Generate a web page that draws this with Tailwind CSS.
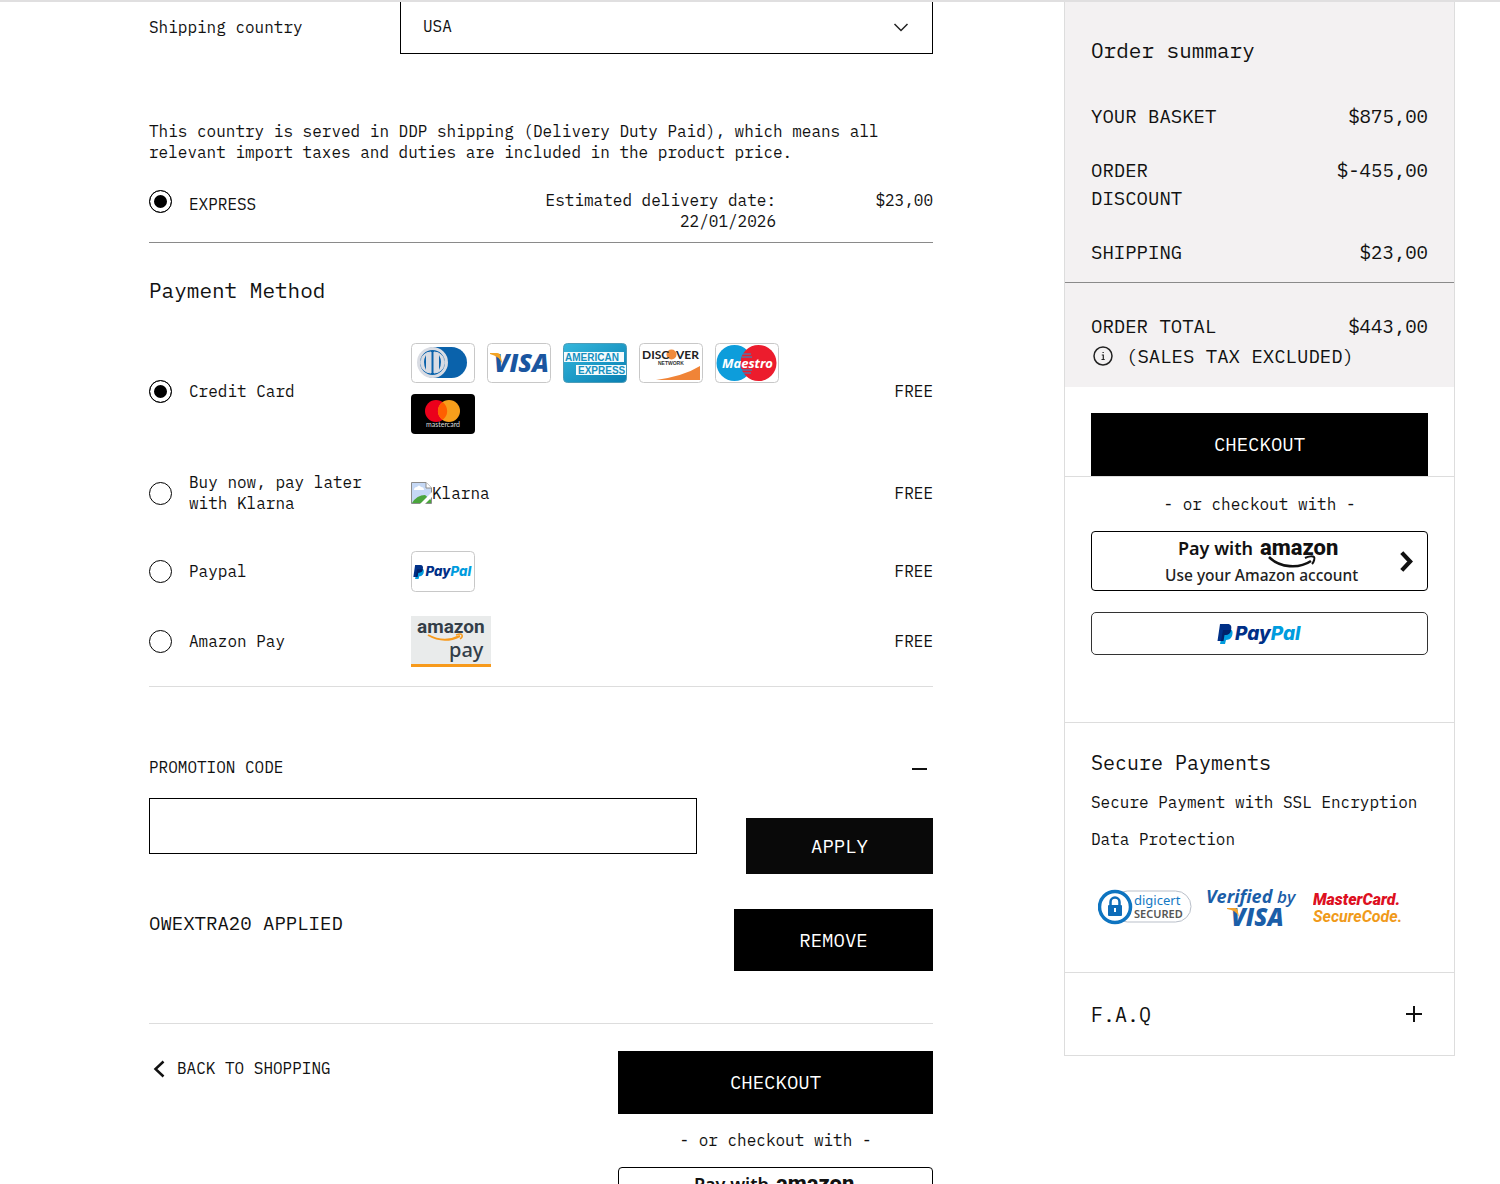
<!DOCTYPE html>
<html lang="en">
<head>
<meta charset="utf-8">
<meta name="viewport" content="width=device-width, initial-scale=1">
<title>Checkout</title>
<script src="https://cdn.jsdelivr.net/npm/@tailwindcss/browser@4"></script>
</head>
<body class="bg-white text-[#111] font-['IBM_Plex_Mono','Liberation_Mono',monospace] text-base leading-[21px]">

<!-- Shared logo artwork -->
<svg class="hidden" aria-hidden="true">
  <symbol id="amazon-pay-label" viewBox="0 0 200 50">
    <text x="18" y="18" font-family="Noto Sans" font-weight="600" font-size="18" fill="#111">Pay with</text>
    <text x="100" y="18" font-family="Roboto" font-weight="800" font-size="22" fill="#111">amazon</text>
    <path d="M109 20c11 11 30 12 42 4" fill="none" stroke="#111" stroke-width="2.600"/>
    <path d="M145 21c4-2 8-2 9-1s0 5-2 7" fill="none" stroke="#111" stroke-width="2"/>
    <text x="5" y="44" font-family="Noto Sans" font-weight="500" font-size="15.500" fill="#222">Use your Amazon account</text>
  </symbol>
  <symbol id="paypal-mark" viewBox="0 0 86 22">
    <path d="M6 6h7c3 1 3 4 2 7-1 3-4 4-6 4l-1 4H3z" fill="#009cde"/>
    <path d="M3 1h7.500c3.500 0 4.500 2.500 3.500 6-1 4-4 5-7 5l-1 6H.500z" fill="#003087"/>
    <path d="M6 7h8c-.500 4-3 5-6.500 5l-1 6H4z" fill="#012169"/>
    <text x="18" y="17" font-family="Inter" font-weight="800" font-style="italic" font-size="19" fill="#003087">Pay<tspan fill="#009cde">Pal</tspan></text>
  </symbol>
</svg>

<header class="h-[2px] bg-[#e0dfe0]"></header>

<div class="flex items-start pl-[149px] pr-[45px] gap-[131px] h-[calc(100vh-2px)] overflow-hidden">

  <main class="flex-1 min-w-0">
    <div class="flex">
      <label for="country" class="w-[251px] pt-[15px]">Shipping country</label>
      <div class="relative flex-1">
        <select id="country" class="appearance-none w-full h-[52px] pl-[22px] pb-[2px] border border-t-0 border-black bg-white"><option>USA</option></select>
        <svg class="absolute right-6 top-5 pointer-events-none" width="16" height="11" viewBox="0 0 16 11" fill="none" stroke="#222" stroke-width="1.500"><path d="M1.500 2 8 8.500 14.500 2"/></svg>
      </div>
    </div>

    <p class="mt-[67px] pr-10">This country is served in DDP shipping (Delivery Duty Paid), which means all relevant import taxes and duties are included in the product price.</p>

    <div class="mt-[27px] pb-[10px] flex border-b border-[#8a8a8a]">
      <input type="radio" id="express" name="shipping" checked class="appearance-none size-[23px] shrink-0 rounded-full border border-black checked:bg-black checked:shadow-[inset_0_0_0_4px_white]">
      <label for="express" class="ml-[17px] pt-1 flex-1">EXPRESS</label>
      <div class="w-[260px] text-right">Estimated delivery date: 22/01/2026</div>
      <div class="w-[157px] text-right">$23,00</div>
    </div>

    <h2 class="mt-[34px] text-[21px] leading-[26px]">Payment Method</h2>

    <div class="mt-9 pb-[19px] border-b border-[#ddd]">
      <div class="grid grid-cols-[40px_222px_1fr_auto] items-center min-h-[104px]">
        <input type="radio" id="cc" name="pay" checked class="appearance-none size-[23px] rounded-full border border-black checked:bg-black checked:shadow-[inset_0_0_0_4px_white]">
        <label for="cc">Credit Card</label>
        <div class="flex flex-wrap gap-x-3 gap-y-[10px] max-w-[400px] pb-1">
          <svg width="64" height="41" viewBox="0 0 64 41" role="img" aria-label="Diners Club"><rect x=".5" y=".5" width="63" height="39" rx="4" fill="#fff" stroke="#c8c8c8"/><rect x="8" y="4" width="48" height="31" rx="15.500" fill="#0a62ab"/><circle cx="21.500" cy="19.500" r="14" fill="#0a62ab" stroke="#d9dce3" stroke-width="3"/><path d="M20 9a10.500 10.500 0 0 0 0 21zM23 9a10.500 10.500 0 0 1 0 21z" fill="#d9dce3" stroke="#d9dce3"/><path d="M15 12q-4 7 0 15zM28 12q4 7 0 15z" fill="#0a62ab"/></svg>
          <svg width="64" height="41" viewBox="0 0 64 41" role="img" aria-label="Visa"><rect x=".5" y=".5" width="63" height="39" rx="4" fill="#fff" stroke="#c8c8c8"/><text x="7" y="29" font-family="Open Sans" font-weight="800" font-style="italic" font-size="25" fill="#1a56a0">VISA</text><path d="M3 10h7q3 0 3.500 3l2 8Q12 13 3 11z" fill="#f2a325"/></svg>
          <svg width="64" height="41" viewBox="0 0 64 41" role="img" aria-label="American Express"><defs><linearGradient id="ax" x1="0" y1="0" x2="1" y2="1"><stop offset="0" stop-color="#35b7dc"/><stop offset="1" stop-color="#087fb2"/></linearGradient></defs><rect x=".5" y=".5" width="63" height="39" rx="4" fill="url(#ax)" stroke="#4c9cb8"/><path d="M1 9h60v10H1zM13 22h50v10H13z" fill="#f4fbfd"/><text x="2" y="18" font-family="Liberation Sans" font-weight="700" font-size="10" fill="#1590bf">AMERICAN</text><text x="15" y="31" font-family="Liberation Sans" font-weight="700" font-size="10" fill="#1590bf">EXPRESS</text></svg>
          <svg width="64" height="41" viewBox="0 0 64 41" role="img" aria-label="Discover Network"><rect x=".5" y=".5" width="63" height="39" rx="4" fill="#fff" stroke="#c8c8c8"/><circle cx="32.500" cy="11.500" r="5" fill="#f08a3a"/><text x="3" y="16" font-family="Lato" font-weight="700" font-size="12" fill="#222">DISC</text><text x="37" y="16" font-family="Lato" font-weight="700" font-size="12" fill="#222">VER</text><text x="19" y="22" font-family="Liberation Sans" font-weight="700" font-size="5" fill="#333">NETWORK</text><path d="M17 37Q45 33 61 23v14z" fill="#f08437"/></svg>
          <svg width="64" height="41" viewBox="0 0 64 41" role="img" aria-label="Maestro"><rect x=".5" y=".5" width="63" height="39" rx="4" fill="#fff" stroke="#c8c8c8"/><circle cx="19.500" cy="20" r="18" fill="#0d9ddb"/><circle cx="43.500" cy="20" r="18" fill="#ec1c2d"/><path d="M28 11h8M27 14h10M26 27h11M27 30h9" stroke="#0d9ddb"/><text x="7" y="25" font-family="Open Sans" font-weight="700" font-style="italic" font-size="13" fill="#fff">Maestro</text></svg>
          <svg width="64" height="41" viewBox="0 0 64 41" role="img" aria-label="Mastercard"><rect width="64" height="40" rx="4" fill="#000"/><circle cx="25" cy="17" r="11" fill="#eb001b"/><circle cx="38" cy="17" r="11" fill="#f79e1b"/><path d="M31.500 8a11 11 0 0 1 0 18a11 11 0 0 1 0-18" fill="#ff5f00"/><text x="32" y="33" text-anchor="middle" font-family="Lato" font-size="7" fill="#ddd">mastercard</text></svg>
        </div>
        <span>FREE</span>
      </div>

      <div class="grid grid-cols-[40px_222px_1fr_auto] items-center min-h-[100px]">
        <input type="radio" id="klarna" name="pay" class="appearance-none size-[23px] rounded-full border border-black checked:bg-black checked:shadow-[inset_0_0_0_4px_white]">
        <label for="klarna" class="pr-8">Buy now, pay later with Klarna</label>
        <div class="flex items-center">
          <svg width="21" height="22" viewBox="0 0 21 22" aria-hidden="true"><path d="M.500.500h14.500l5.500 5.500v15.500H.500z" fill="#c5d8f5" stroke="#8c8c8c"/><path d="M15 .500v5.500h5.500" fill="#fff" stroke="#8c8c8c"/><path d="M3 8q0-3 3-3 2-3 4 0 3 0 3 3z" fill="#fff"/><path d="M1 21q5-8 13-8l6 5v3z" fill="#4aa53c"/><path d="M21 10 9 22h5l7-7z" fill="#fff"/></svg>
          <span>Klarna</span>
        </div>
        <span>FREE</span>
      </div>

      <div class="grid grid-cols-[40px_222px_1fr_auto] items-center min-h-[57px]">
        <input type="radio" id="paypal" name="pay" class="appearance-none size-[23px] rounded-full border border-black checked:bg-black checked:shadow-[inset_0_0_0_4px_white]">
        <label for="paypal">Paypal</label>
        <svg width="64" height="41" viewBox="0 0 64 41" role="img" aria-label="PayPal"><rect x=".5" y=".5" width="63" height="40" rx="4" fill="#fff" stroke="#c8c8c8"/><use href="#paypal-mark" x="2" y="13" width="60" height="16"/></svg>
        <span>FREE</span>
      </div>

      <div class="mt-4 grid grid-cols-[40px_222px_1fr_auto] items-center min-h-[50px]">
        <input type="radio" id="amazon" name="pay" class="appearance-none size-[23px] rounded-full border border-black checked:bg-black checked:shadow-[inset_0_0_0_4px_white]">
        <label for="amazon">Amazon Pay</label>
        <svg width="80" height="51" viewBox="0 0 80 51" role="img" aria-label="Amazon Pay"><path d="M0 0h80v48H0z" fill="#e9ebeb"/><path d="M0 48h80v3H0z" fill="#f79a1c"/><text x="6" y="17" font-family="Roboto" font-weight="700" font-size="19" fill="#333e48">amazon</text><path d="M17 19q16 9 32 1" fill="none" stroke="#f79a1c" stroke-width="2"/><path d="M45 19q5-2 6 0t-2 4" fill="none" stroke="#f79a1c" stroke-width="1.500"/><text x="38" y="41" font-family="Noto Sans" font-weight="500" font-size="20" fill="#333e48">pay</text></svg>
        <span>FREE</span>
      </div>
    </div>

    <section>
      <div class="mt-[70px] flex justify-between items-center pr-[6px]">
        <label for="promo">PROMOTION CODE</label>
        <button aria-label="Collapse promotion code" class="w-[15px] pt-1"><svg width="15" height="3" viewBox="0 0 15 3"><path d="M0 0h15v2H0z" fill="#111"/></svg></button>
      </div>
      <div class="mt-5 flex items-start gap-[49px]">
        <input id="promo" type="text" class="flex-1 min-w-0 h-14 border border-black px-4">
        <button class="mt-5 w-[187px] h-14 bg-[#090909] text-white text-[19px]">APPLY</button>
      </div>
      <div class="mt-[35px] flex justify-between items-start">
        <span class="pt-1 text-[19px]">OWEXTRA20 APPLIED</span>
        <button class="w-[199px] h-[62px] bg-black text-white text-[19px]">REMOVE</button>
      </div>
    </section>

    <div class="mt-[52px] pt-[27px] border-t border-[#ddd] flex justify-between items-start">
      <a href="#" class="flex items-center pt-[7px] pl-1 gap-3"><svg width="12" height="18" viewBox="0 0 12 18" fill="none" stroke="#111" stroke-width="2.500"><path d="M10.500 1.500 2.500 9l8 7.500"/></svg>BACK TO SHOPPING</a>
      <div class="w-[315px]">
        <button class="w-full h-[63px] bg-black text-white text-[19px]">CHECKOUT</button>
        <p class="mt-4 text-center">- or checkout with -</p>
        <button aria-label="Pay with Amazon, use your Amazon account" class="relative mt-4 w-full h-[60px] rounded border border-black flex justify-center pt-[5px]">
          <svg width="200" height="50"><use href="#amazon-pay-label"/></svg>
          <svg class="absolute right-4 top-5" width="12" height="20" viewBox="0 0 12 20" fill="none" stroke="#111" stroke-width="4"><path d="m1.500 1.500 8 8.500-8 8.500"/></svg>
        </button>
      </div>
    </div>
  </main>

  <aside class="w-[391px] shrink-0 border border-t-0 border-[#ddd]">
    <section class="bg-[#f3f1f2]">
      <div class="px-[26px] pt-[35px] pb-4 border-b border-[#8a8a8a]">
        <h2 class="text-[21px] leading-[26px]">Order summary</h2>
        <dl class="mt-[39px] flex flex-col gap-[26px] text-[19px] leading-7">
          <div class="flex justify-between"><dt>YOUR BASKET</dt><dd>$875,00</dd></div>
          <div class="flex justify-between"><dt class="w-[130px]">ORDER DISCOUNT</dt><dd>$-455,00</dd></div>
          <div class="flex justify-between"><dt>SHIPPING</dt><dd>$23,00</dd></div>
        </dl>
      </div>
      <div class="px-[26px] pt-7 pb-4 text-[19px] leading-[30px]">
        <div class="flex justify-between"><span>ORDER TOTAL</span><span>$443,00</span></div>
        <div class="flex items-center gap-[13px]"><svg class="ml-[2px]" width="20" height="20" viewBox="0 0 20 20" fill="none" stroke="#222" stroke-width="1.500"><circle cx="10" cy="10" r="9"/><path d="M8.800 9h1.500v4.500M8.500 13.500h3.200M9.500 6.500h1.300" stroke-width="1.200"/></svg><span>(SALES TAX EXCLUDED)</span></div>
      </div>
    </section>
    <div class="px-[26px] pt-[26px] border-b border-[#ddd]">
      <button class="block w-full h-[63px] bg-black text-white text-[19px]">CHECKOUT</button>
    </div>
    <div class="px-[26px] pt-[17px] pb-[67px] border-b border-[#ddd]">
      <p class="text-center">- or checkout with -</p>
      <button aria-label="Pay with Amazon, use your Amazon account" class="relative mt-4 w-full h-[60px] rounded border border-black flex justify-center pt-[5px]">
        <svg width="200" height="50"><use href="#amazon-pay-label"/></svg>
        <svg class="absolute right-[14px] top-[19px]" width="13" height="21" viewBox="0 0 12 20" fill="none" stroke="#111" stroke-width="4"><path d="m1.500 1.500 8 8.500-8 8.500"/></svg>
      </button>
      <button aria-label="PayPal" class="mt-[21px] w-full h-[43px] rounded-[5px] border border-[#333] flex items-center justify-center">
        <svg width="86" height="22"><use href="#paypal-mark"/></svg>
      </button>
    </div>
    <section class="px-[26px] pt-[27px] pb-[43px] border-b border-[#ddd]">
      <h2 class="text-[20px] leading-[26px]">Secure Payments</h2>
      <p class="mt-4">Secure Payment with SSL Encryption</p>
      <p class="mt-4">Data Protection</p>
      <div class="mt-[35px] pl-[7px] flex items-center gap-[14px]">
        <svg width="94" height="44" viewBox="0 0 94 44" role="img" aria-label="Digicert secured"><rect x="14" y="6" width="79" height="31" rx="15.500" fill="#fff" stroke="#b9bfc9"/><circle cx="17" cy="22" r="15.500" fill="#fff" stroke="#0e74c0" stroke-width="3.500"/><rect x="10" y="20" width="14" height="11" rx="1" fill="#0e6cb8"/><path d="M12.500 20v-3a4.500 4.500 0 0 1 9 0v3" fill="none" stroke="#0e6cb8" stroke-width="2.500"/><path d="M17 23v4" stroke="#fff" stroke-width="2"/><text x="36" y="20" font-family="Noto Sans" font-size="13" fill="#1479c4">digicert</text><text x="36" y="33" font-family="Noto Sans" font-weight="600" font-size="11" fill="#555">SECURED</text></svg>
        <svg width="93" height="44" viewBox="0 0 93 44" role="img" aria-label="Verified by Visa"><text x="0" y="18" font-family="Open Sans" font-weight="700" font-style="italic" font-size="18" fill="#1b5ea8">Verified</text><text x="71" y="18" font-family="Open Sans" font-weight="600" font-style="italic" font-size="17" fill="#1b5ea8">by</text><text x="25" y="41" font-family="Open Sans" font-weight="800" font-style="italic" font-size="24" fill="#1b5ea8">VISA</text><path d="M21 23h8q3 0 3 4l1 5Q30 25 21 24z" fill="#f2a32f"/></svg>
        <svg width="94" height="44" viewBox="0 0 94 44" role="img" aria-label="MasterCard SecureCode"><text x="0" y="20" font-family="Roboto" font-weight="900" font-style="italic" font-size="16" fill="#dd1021">MasterCard.</text><text x="0" y="37" font-family="Roboto" font-weight="700" font-style="italic" font-size="16" fill="#f09a1a">SecureCode.</text></svg>
      </div>
    </section>
    <section class="px-[26px] h-[82px] flex items-center justify-between">
      <h2 class="text-[20px]">F.A.Q</h2>
      <button aria-label="Expand F.A.Q" class="mr-[6px]"><svg width="16" height="16" viewBox="0 0 16 16" stroke="#111" stroke-width="2"><path d="M0 8h16M8 0v16"/></svg></button>
    </section>
  </aside>
</div>
</body>
</html>
